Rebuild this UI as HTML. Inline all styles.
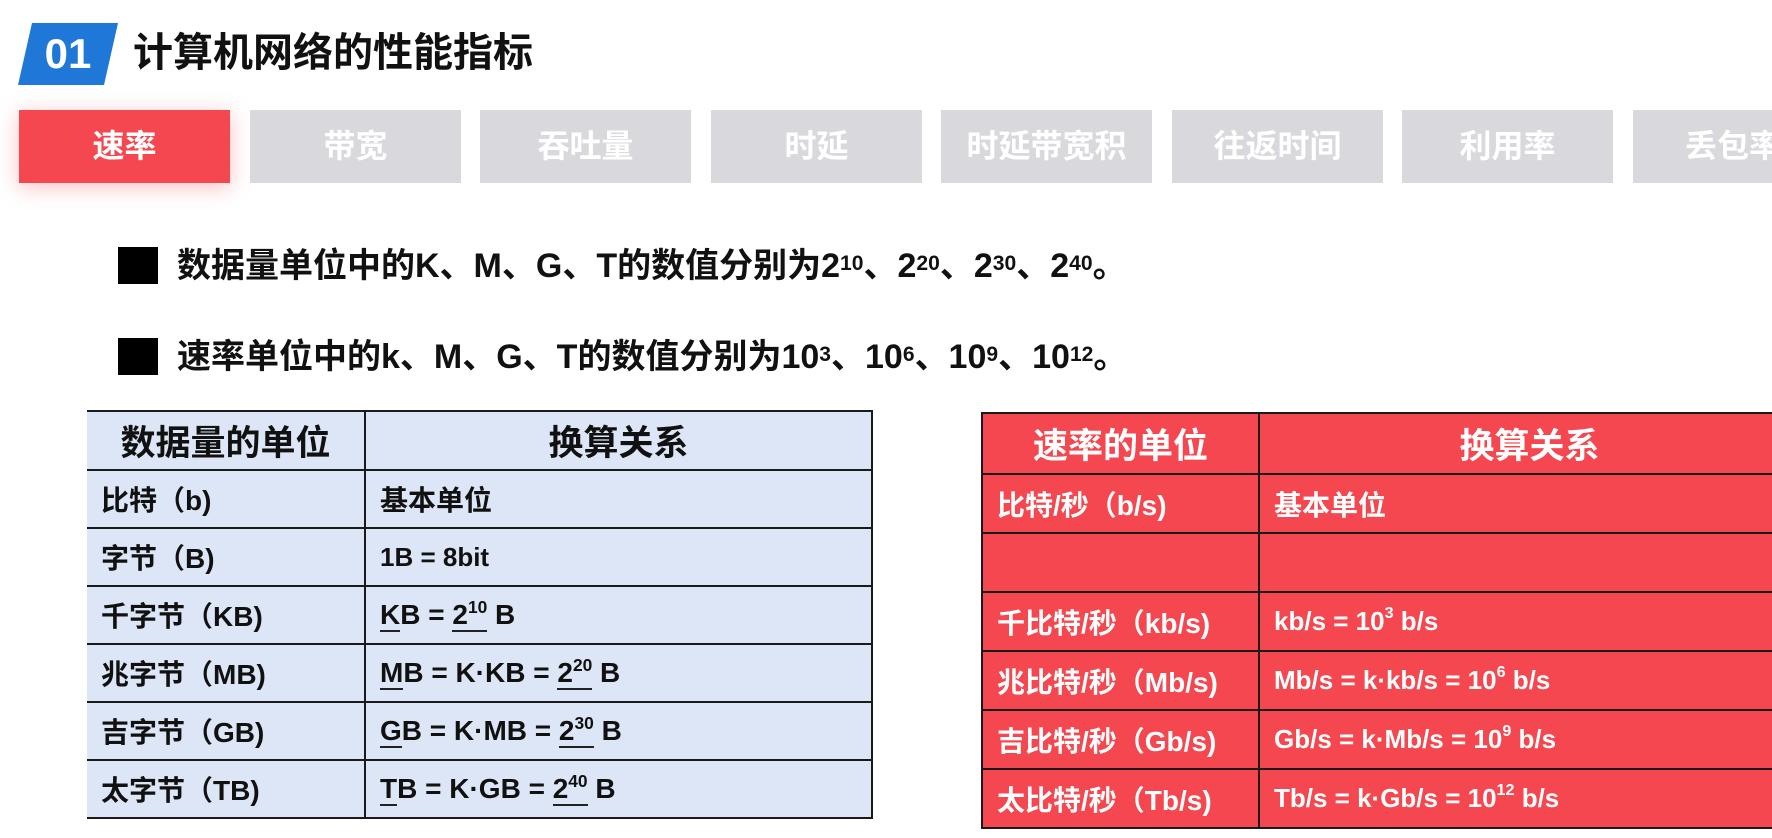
<!DOCTYPE html>
<html><head><meta charset="utf-8"><style>
*{margin:0;padding:0;box-sizing:border-box}
body{width:1772px;height:838px;background:#fff;position:relative;overflow:hidden;font-family:"Liberation Sans Narrow","Liberation Sans","Noto Sans CJK SC",sans-serif;font-weight:bold;color:#111}
.abs{position:absolute}
.badge{left:18px;top:23px;width:100px;height:62px;background:#1f78d8;clip-path:polygon(14% 0,100% 0,86% 100%,0 100%);color:#fff;font-size:42px;line-height:62px;text-align:center}
.title{left:133px;top:29px;font-size:40px;line-height:48px}
.tab{top:110px;height:73px;width:211px;background:#d9d8dc;color:#fff;font-size:32px;line-height:73px;text-align:center}
.tab.on{background:#f4474f;box-shadow:0 4px 20px rgba(244,71,79,.35)}
.sq{left:118px;width:40px;height:37px;background:#000}
.bl{left:177px;font-size:34px;line-height:42px}
sup{font-size:62%;vertical-align:top;position:relative;top:-2px}
table{position:absolute;border-collapse:collapse;font-size:28px}
td{border:2px solid #1a1a1a;padding:0 0 0 14px;height:58px;white-space:nowrap}
th{border:2px solid #1a1a1a;font-size:35px;height:59px}
.lt{left:87px;top:410px;width:786px;background:#dde6f6}
.lt td:first-child,.lt th:first-child{border-left:none}
.rt{left:981px;top:412px;width:820px;background:#f4474f;color:#fff}
.rt td{height:59px}
.rt th{height:61px}
u{text-decoration:none;border-bottom:2px solid #222}
.n{font-size:26px}
</style></head><body>
<div class="abs badge">01</div>
<div class="abs title">计算机网络的性能指标</div>
<div class="abs tab on" style="left:19px">速率</div>
<div class="abs tab" style="left:250px">带宽</div>
<div class="abs tab" style="left:480px">吞吐量</div>
<div class="abs tab" style="left:711px">时延</div>
<div class="abs tab" style="left:941px">时延带宽积</div>
<div class="abs tab" style="left:1172px">往返时间</div>
<div class="abs tab" style="left:1402px">利用率</div>
<div class="abs tab" style="left:1633px;width:160px;text-align:left;padding-left:52px">丢包率</div>
<div class="abs sq" style="top:247px"></div>
<div class="abs bl" style="top:245px">数据量单位中的K、M、G、T的数值分别为2<sup>10</sup>、2<sup>20</sup>、2<sup>30</sup>、2<sup>40</sup>。</div>
<div class="abs sq" style="top:338px"></div>
<div class="abs bl" style="top:336px">速率单位中的k、M、G、T的数值分别为10<sup>3</sup>、10<sup>6</sup>、10<sup>9</sup>、10<sup>12</sup>。</div>
<table class="lt">
<tr><th style="width:278px">数据量的单位</th><th>换算关系</th></tr>
<tr><td>比特（b)</td><td>基本单位</td></tr>
<tr><td>字节（B)</td><td class="n">1B = 8bit</td></tr>
<tr><td>千字节（KB)</td><td><u>K</u>B = <u>2<sup>10</sup></u> B</td></tr>
<tr><td>兆字节（MB)</td><td><u>M</u>B = K·KB = <u>2<sup>20</sup></u> B</td></tr>
<tr><td>吉字节（GB)</td><td><u>G</u>B = K·MB = <u>2<sup>30</sup></u> B</td></tr>
<tr><td>太字节（TB)</td><td><u>T</u>B = K·GB = <u>2<sup>40</sup></u> B</td></tr>
</table>
<table class="rt">
<tr><th style="width:277px">速率的单位</th><th>换算关系</th></tr>
<tr><td>比特/秒（b/s)</td><td>基本单位</td></tr>
<tr><td></td><td></td></tr>
<tr><td>千比特/秒（kb/s)</td><td class="n">kb/s = 10<sup>3</sup> b/s</td></tr>
<tr><td>兆比特/秒（Mb/s)</td><td class="n">Mb/s = k·kb/s = 10<sup>6</sup> b/s</td></tr>
<tr><td>吉比特/秒（Gb/s)</td><td class="n">Gb/s = k·Mb/s = 10<sup>9</sup> b/s</td></tr>
<tr><td>太比特/秒（Tb/s)</td><td class="n">Tb/s = k·Gb/s = 10<sup>12</sup> b/s</td></tr>
</table>
</body></html>
